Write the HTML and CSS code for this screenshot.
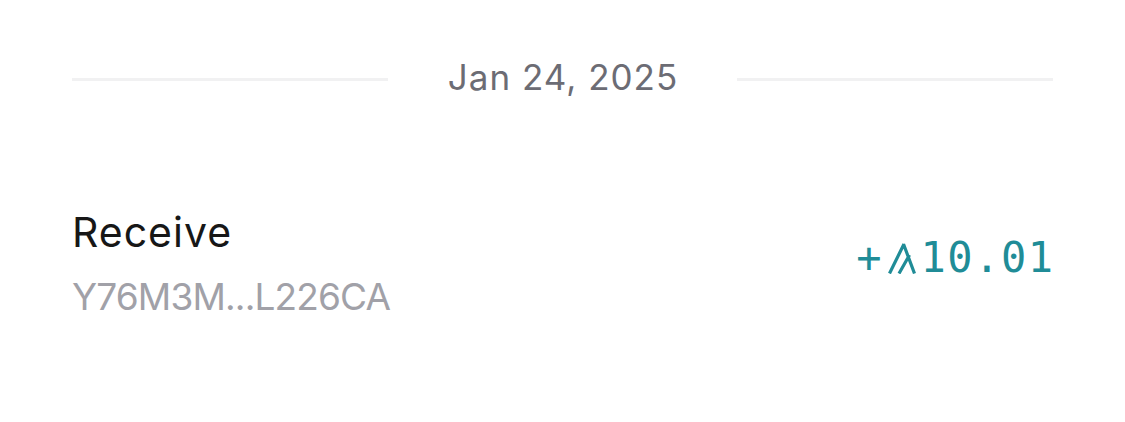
FILE: index.html
```html
<!DOCTYPE html>
<html>
<head>
<meta charset="utf-8">
<link rel="stylesheet" href="styles.css">
</head>
<body>
<div class="page">
  <div class="date-row">
    <div class="rule"></div>
    <div class="date">Jan 24, 2025</div>
    <div class="rule"></div>
  </div>
  <div class="tx">
    <div class="tx-left">
      <div class="tx-title">Receive</div>
      <div class="tx-addr">Y76M3M...L226CA</div>
    </div>
    <div class="tx-amount"><span class="sign">+</span><svg class="cur" viewBox="0 0 28 31" width="28" height="31"><path d="M1.5 30.5 L16 1 M15.5 1 L26.5 30.5 M11 30.5 L21.5 12" fill="none" stroke="#208c97" stroke-width="3.2"/></svg><span class="num">10.01</span></div>
  </div>
</div>
</body>
</html>
```
FILE: styles.css
```css
html, body { margin: 0; padding: 0; background: #fff; }
.page { width: 1125px; height: 422px; padding: 0 72px; box-sizing: border-box; font-family: Inter, "Noto Sans", sans-serif; }
.date-row { display: flex; align-items: flex-start; gap: 60px; padding-top: 54px; height: 46px; }
.rule { flex: 1; height: 3px; margin-top: 24px; background: #f1f1f2; }
.date { font-size: 35px; color: #6c6c74; letter-spacing: 1px; line-height: 46px; margin-right: -1px; }
.tx { display: flex; justify-content: space-between; align-items: flex-start; margin-top: 106px; }
.tx-title { font-size: 41px; color: #171717; line-height: 52px; letter-spacing: 1px; }
.tx-addr { font-size: 37px; color: #a1a1a8; line-height: 46px; letter-spacing: -0.85px; margin-top: 16px; }
.tx-amount { font-family: "DejaVu Sans Mono", monospace; font-size: 42px; line-height: 50px; color: #208c97; margin-top: 27px; white-space: nowrap; }
.sign { letter-spacing: 2px; }
.cur { display: inline-block; vertical-align: -2px; margin: 0 5px 0 4px; }
.num { letter-spacing: 1.5px; margin-right: -1.5px; }
```
